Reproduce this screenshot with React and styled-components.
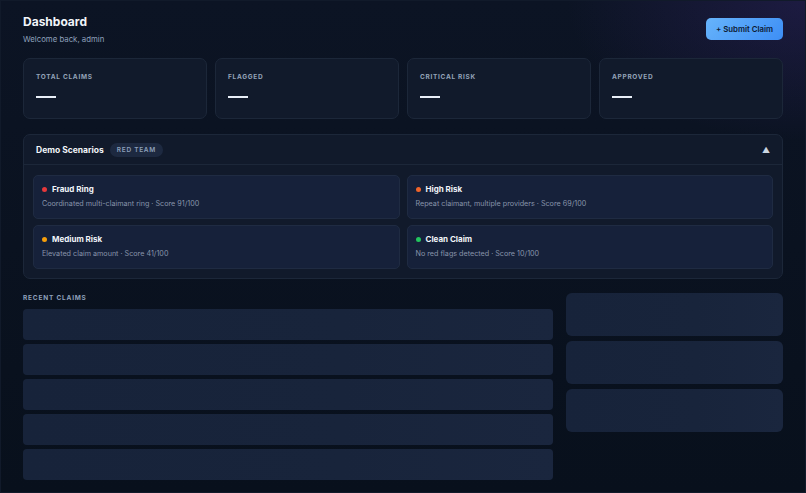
import React from "react";
import styled, { createGlobalStyle } from "styled-components";

const Global = createGlobalStyle`
  * { box-sizing: border-box; }
  html, body { margin: 0; padding: 0; background: #0a111e; }
  body { font-family: Inter, "Noto Sans", sans-serif; color: #e2e8f0; }
`;

const Page = styled.div`
  width: 806px;
  height: 493px;
  overflow: hidden;
  border: 1px solid #111a2a;
  background:
    radial-gradient(ellipse 340px 200px at 100% 0%, rgba(60, 40, 120, 0.35), transparent 70%),
    linear-gradient(180deg, #0c1424 0%, #08101c 100%);
  padding: 12px 22px 0 22px;
`;

const Header = styled.div`
  display: flex;
  justify-content: space-between;
  align-items: flex-start;
  height: 45px;
`;

const Title = styled.h1`
  margin: 0;
  padding-top: 1px;
  font-size: 12px;
  font-weight: 700;
  color: #f1f5f9;
  line-height: 16px;
`;

const Sub = styled.div`
  margin-top: 4px;
  font-size: 7.8px;
  color: #8ea0bb;
`;

const Button = styled.button`
  margin-top: 5px;
  border: none;
  height: 22px;
  width: 77px;
  border-radius: 5px;
  background: linear-gradient(135deg, #67b4fb 0%, #3d8ef5 100%);
  color: #0c1a33;
  font-family: inherit;
  font-size: 7.8px;
  font-weight: 600;
  padding: 0;
`;

const Stats = styled.div`
  display: grid;
  grid-template-columns: repeat(4, 1fr);
  gap: 8px;
`;

const StatCard = styled.div`
  height: 61px;
  border-radius: 7px;
  background: #111a2b;
  border: 1px solid #1c2739;
  padding: 14px 12px;
`;

const StatLabel = styled.div`
  font-size: 6.5px;
  font-weight: 700;
  letter-spacing: 0.7px;
  color: #94a3b8;
  line-height: 9px;
`;

const Dash = styled.div`
  margin-top: 14px;
  width: 20px;
  height: 2px;
  background: #e8eef7;
`;

const Panel = styled.div`
  margin-top: 15px;
  border-radius: 7px;
  background: #111a2b;
  border: 1px solid #1c2739;
`;

const PanelHead = styled.div`
  height: 30px;
  display: flex;
  align-items: center;
  padding: 0 12px;
  border-bottom: 1px solid #1c2739;
`;

const PanelTitle = styled.div`
  font-size: 8.5px;
  font-weight: 700;
  color: #f1f5f9;
`;

const Badge = styled.span`
  margin-left: 6px;
  height: 14px;
  padding: 0 7px;
  display: inline-flex;
  align-items: center;
  border-radius: 7px;
  background: #1d2940;
  color: #8ea0bb;
  font-size: 6.5px;
  font-weight: 600;
  letter-spacing: 0.7px;
`;

const Caret = styled.span`
  margin-left: auto;
  font-size: 8px;
  color: #cbd5e1;
`;

const ScenarioGrid = styled.div`
  display: grid;
  grid-template-columns: 1fr 1fr;
  gap: 6px 7px;
  padding: 10px 9px 9px;
`;

const Scenario = styled.div`
  height: 44px;
  border-radius: 5px;
  background: #16213a;
  border: 1px solid #1f2b42;
  padding: 8px 8px;
`;

const ScTitle = styled.div`
  display: flex;
  align-items: center;
  gap: 5px;
  font-size: 8px;
  font-weight: 700;
  color: #f1f5f9;
  line-height: 10px;
`;

const Dot = styled.span`
  width: 5px;
  height: 5px;
  border-radius: 50%;
  background: ${(p) => p.$c};
`;

const ScDesc = styled.div`
  margin-top: 5px;
  font-size: 7.2px;
  color: #8894aa;
  line-height: 9px;
`;

const Lower = styled.div`
  margin-top: 14px;
  display: grid;
  grid-template-columns: 1fr 217px;
  gap: 13px;
  align-items: start;
`;

const SectionLabel = styled.div`
  font-size: 6.5px;
  font-weight: 700;
  letter-spacing: 0.8px;
  color: #8ea0bb;
  line-height: 10px;
`;

const List = styled.div`
  display: flex;
  flex-direction: column;
  gap: 4px;
  margin-top: 6px;
`;

const Skel = styled.div`
  height: ${(p) => p.$h}px;
  border-radius: 4px;
  background: linear-gradient(90deg, #17233a 0%, #18243b 60%, #1a263e 100%);
`;

const Side = styled.div`
  display: flex;
  flex-direction: column;
  gap: 5px;
  margin-top: 0px;
`;

const SideSkel = styled(Skel)`
  border-radius: 6px;
`;

const stats = ["Total Claims", "Flagged", "Critical Risk", "Approved"];
const scenarios = [
  { t: "Fraud Ring", d: "Coordinated multi-claimant ring · Score 91/100", c: "#e5383b" },
  { t: "High Risk", d: "Repeat claimant, multiple providers · Score 69/100", c: "#f0642a" },
  { t: "Medium Risk", d: "Elevated claim amount · Score 41/100", c: "#f59e0b" },
  { t: "Clean Claim", d: "No red flags detected · Score 10/100", c: "#22c55e" },
];

export default function App() {
  return (
    <>
      <Global />
      <Page>
        <Header>
          <div>
            <Title>Dashboard</Title>
            <Sub>Welcome back, admin</Sub>
          </div>
          <Button>+ Submit Claim</Button>
        </Header>
        <Stats>
          {stats.map((s) => (
            <StatCard key={s}>
              <StatLabel>{s.toUpperCase()}</StatLabel>
              <Dash />
            </StatCard>
          ))}
        </Stats>
        <Panel>
          <PanelHead>
            <PanelTitle>Demo Scenarios</PanelTitle>
            <Badge>RED TEAM</Badge>
            <Caret>▲</Caret>
          </PanelHead>
          <ScenarioGrid>
            {scenarios.map((s) => (
              <Scenario key={s.t}>
                <ScTitle>
                  <Dot $c={s.c} />
                  {s.t}
                </ScTitle>
                <ScDesc>{s.d}</ScDesc>
              </Scenario>
            ))}
          </ScenarioGrid>
        </Panel>
        <Lower>
          <div>
            <SectionLabel>RECENT CLAIMS</SectionLabel>
            <List>
              {[0, 1, 2, 3, 4].map((i) => (
                <Skel key={i} $h={31} />
              ))}
            </List>
          </div>
          <Side>
            {[0, 1, 2].map((i) => (
              <SideSkel key={i} $h={43} />
            ))}
          </Side>
        </Lower>
      </Page>
    </>
  );
}
